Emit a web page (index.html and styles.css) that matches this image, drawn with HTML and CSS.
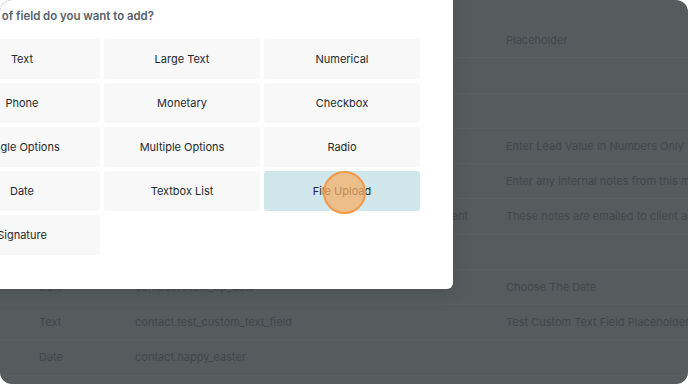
FILE: index.html
```html
<!DOCTYPE html>
<html lang="en">
<head>
    <meta charset="UTF-8">
    <meta name="viewport" content="width=device-width, initial-scale=1.0">
    <title>Add Custom Field</title>
    <link rel="stylesheet" href="styles.css">
</head>
<body>
    <div class="frame">
        <!-- tabela de campos atrás do overlay -->
        <div class="fields-table">
            <div class="row"><span class="c-type">Text</span><span class="c-key">contact.placeholder_text</span><span class="c-extra"></span><span class="c-ph">Placeholder</span></div>
            <div class="row"><span class="c-type">Text</span><span class="c-key">contact.company_name</span><span class="c-extra"></span><span class="c-ph"></span></div>
            <div class="row"><span class="c-type">Phone</span><span class="c-key">contact.phone_number</span><span class="c-extra"></span><span class="c-ph"></span></div>
            <div class="row"><span class="c-type">Monetary</span><span class="c-key">contact.lead_value</span><span class="c-extra"></span><span class="c-ph">Enter Lead Value In Numbers Only</span></div>
            <div class="row"><span class="c-type">Large Text</span><span class="c-key">contact.internal_notes</span><span class="c-extra"></span><span class="c-ph">Enter any internal notes from this meeting</span></div>
            <div class="row"><span class="c-type">Large Text</span><span class="c-key">contact.client_notes</span><span class="c-extra">Notes Sent to Client</span><span class="c-ph">These notes are emailed to client as a summary</span></div>
            <div class="row"><span class="c-type">Text</span><span class="c-key">contact.source</span><span class="c-extra"></span><span class="c-ph"></span></div>
            <div class="row"><span class="c-type">Date</span><span class="c-key">contact.follow_up_date</span><span class="c-extra"></span><span class="c-ph">Choose The Date</span></div>
            <div class="row"><span class="c-type">Text</span><span class="c-key">contact.test_custom_text_field</span><span class="c-extra"></span><span class="c-ph">Test Custom Text Field Placeholder</span></div>
            <div class="row"><span class="c-type">Date</span><span class="c-key">contact.happy_easter</span><span class="c-extra"></span><span class="c-ph"></span></div>
        </div>

        <!-- modal -->
        <div class="modal">
            <div class="modal-title">What type of field do you want to add?</div>
            <div class="field-grid">
                <div class="field-option">Text</div>
                <div class="field-option">Large Text</div>
                <div class="field-option">Numerical</div>
                <div class="field-option">Phone</div>
                <div class="field-option">Monetary</div>
                <div class="field-option">Checkbox</div>
                <div class="field-option">Single Options</div>
                <div class="field-option">Multiple Options</div>
                <div class="field-option">Radio</div>
                <div class="field-option">Date</div>
                <div class="field-option">Textbox List</div>
                <div class="field-option selected">File Upload<span class="click-dot"></span></div>
                <div class="field-option">Signature</div>
            </div>
        </div>
    </div>
</body>
</html>
```

FILE: styles.css
```css
body {
    margin: 0;
    background: #ffffff;
    font-family: 'Inter', 'Noto Sans', sans-serif;
}
.frame {
    position: relative;
    width: 688px;
    height: 384px;
    border-radius: 12px;
    overflow: hidden;
    background: #565b5e;
}
.fields-table {
    padding-top: 23px;
}
.row {
    display: flex;
    align-items: center;
    height: 35.25px;
    border-bottom: 1px solid #5a5f62;
    box-sizing: border-box;
    font-size: 11px;
    color: #43474a;
    white-space: nowrap;
}
.c-type {
    width: 96px;
    padding-left: 39px;
    flex-shrink: 0;
}
.c-key {
    width: 200px;
    flex-shrink: 0;
}
.c-extra {
    width: 133px;
    flex-shrink: 0;
    text-align: right;
}
.c-ph {
    padding-left: 38px;
}
.modal {
    position: absolute;
    left: -88px;
    top: -16px;
    width: 541px;
    height: 305px;
    box-sizing: border-box;
    padding: 24px 33px 0 32px;
    background: #ffffff;
    border-radius: 6px;
    box-shadow: 0 4px 18px rgba(0, 0, 0, 0.12);
}
.modal-title {
    font-size: 11.4px;
    font-weight: 600;
    line-height: 16px;
    color: #56606a;
    margin-left: -2px;
}
.field-grid {
    display: grid;
    grid-template-columns: repeat(3, 156px);
    grid-auto-rows: 40px;
    gap: 4px;
    margin-top: 15px;
}
.field-option {
    position: relative;
    display: flex;
    align-items: center;
    justify-content: center;
    background: #f8f8f8;
    border-radius: 3px;
    font-size: 11px;
    color: #26292c;
}
.field-option.selected {
    background: #cfe6eb;
}
.click-dot {
    position: absolute;
    left: 59px;
    top: 0;
    width: 39px;
    height: 39px;
    border-radius: 50%;
    border: 2px solid #f2994a;
    background: rgba(247, 175, 100, 0.72);
}
```
